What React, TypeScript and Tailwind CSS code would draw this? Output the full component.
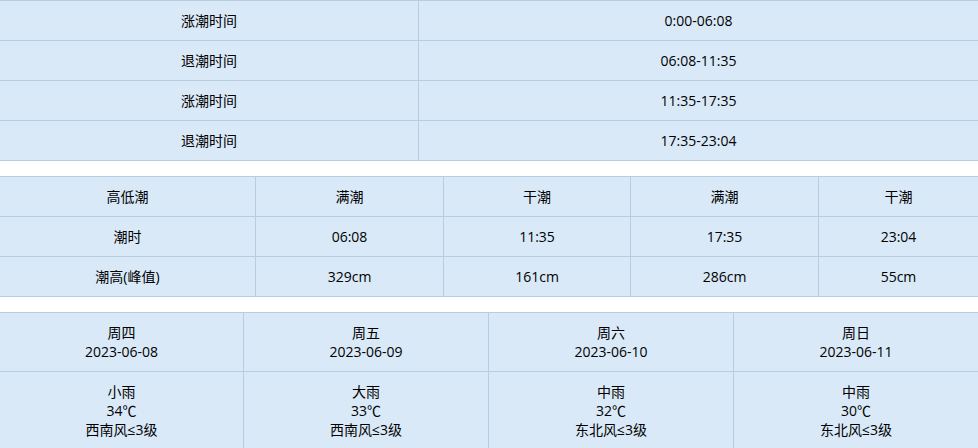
import React from "react";

const font = {
  fontFamily: '"Open Sans", "Noto Sans CJK SC", sans-serif',
};

const tideTimes = [
  ["涨潮时间", "0:00-06:08"],
  ["退潮时间", "06:08-11:35"],
  ["涨潮时间", "11:35-17:35"],
  ["退潮时间", "17:35-23:04"],
];

const tideTable = [
  ["高低潮", "满潮", "干潮", "满潮", "干潮"],
  ["潮时", "06:08", "11:35", "17:35", "23:04"],
  ["潮高(峰值)", "329cm", "161cm", "286cm", "55cm"],
];

const days = [
  { w: "周四", d: "2023-06-08", wx: "小雨", t: "34℃", wind: "西南风≤3级" },
  { w: "周五", d: "2023-06-09", wx: "大雨", t: "33℃", wind: "西南风≤3级" },
  { w: "周六", d: "2023-06-10", wx: "中雨", t: "32℃", wind: "东北风≤3级" },
  { w: "周日", d: "2023-06-11", wx: "中雨", t: "30℃", wind: "东北风≤3级" },
];

export default function App() {
  return (
    <div className="w-[978px] h-[448px] overflow-hidden bg-white text-[14px] text-black" style={font}>
      {/* Table 1 */}
      <div className="grid grid-cols-[419px_1fr] border-t border-[#b8cde0] bg-[#d9e9f7]">
        {tideTimes.map(([a, b], i) => (
          <React.Fragment key={i}>
            <div className="h-[40px] flex items-center justify-center border-b border-r border-[#b8cde0]">{a}</div>
            <div className="h-[40px] flex items-center justify-center border-b border-[#b8cde0]">{b}</div>
          </React.Fragment>
        ))}
      </div>

      {/* Table 2 */}
      <div className="mt-[15px] grid grid-cols-[256px_188px_187px_188px_1fr] border-t border-[#b8cde0] bg-[#d9e9f7]">
        {tideTable.map((row, i) => (
          <React.Fragment key={i}>
            {row.map((c, j) => (
              <div
                key={j}
                className={
                  j < 4
                    ? "h-[40px] flex items-center justify-center border-b border-r border-[#b8cde0]"
                    : "h-[40px] flex items-center justify-center border-b border-[#b8cde0]"
                }
              >
                {c}
              </div>
            ))}
          </React.Fragment>
        ))}
      </div>

      {/* Table 3 */}
      <div className="mt-[15px] grid grid-cols-[244px_245px_245px_1fr] border-t border-[#b8cde0] bg-[#d9e9f7] leading-[19px]">
        {days.map((d, j) => (
          <div
            key={"h" + j}
            className={
              j < 3
                ? "py-[10px] flex flex-col items-center border-b border-r border-[#b8cde0]"
                : "py-[10px] flex flex-col items-center border-b border-[#b8cde0]"
            }
          >
            <span>{d.w}</span>
            <span>{d.d}</span>
          </div>
        ))}
        {days.map((d, j) => (
          <div
            key={"b" + j}
            className={
              j < 3
                ? "py-[10px] flex flex-col items-center border-b border-r border-[#b8cde0]"
                : "py-[10px] flex flex-col items-center border-b border-[#b8cde0]"
            }
          >
            <span>{d.wx}</span>
            <span>{d.t}</span>
            <span>{d.wind}</span>
          </div>
        ))}
      </div>
    </div>
  );
}
